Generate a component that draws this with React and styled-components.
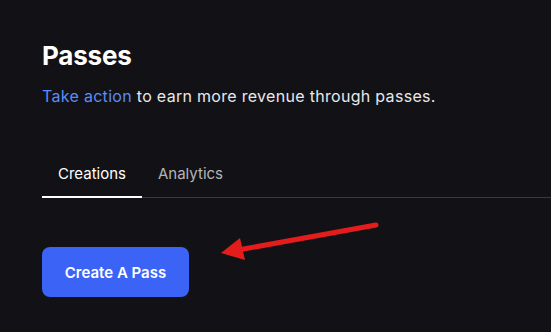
import React from "react";
import styled, { createGlobalStyle } from "styled-components";

const Global = createGlobalStyle`
  html, body {
    margin: 0;
    padding: 0;
    background: #121216;
  }
  body {
    font-family: Inter, "Noto Sans", sans-serif;
    color: #ffffff;
  }
`;

const Page = styled.div`
  position: relative;
  width: 551px;
  height: 332px;
  overflow: hidden;
  background: #121216;
  padding: 40px 0 0 42px;
  box-sizing: border-box;
`;

const Title = styled.h1`
  margin: 0;
  font-size: 26px;
  line-height: 32px;
  font-weight: 700;
  letter-spacing: -0.2px;
`;

const Subtitle = styled.p`
  margin: 14px 0 0;
  font-size: 16px;
  line-height: 20px;
  letter-spacing: 0.3px;
  color: #e8e8ea;
`;

const Link = styled.span`
  color: #5b8cf5;
`;

const Tabs = styled.div`
  display: flex;
  margin-top: 57px;
  border-bottom: 1px solid #3a3a40;
`;

const Tab = styled.div`
  padding: 0 16px 11px;
  font-size: 15px;
  line-height: 22px;
  color: ${(p) => (p.$active ? "#ffffff" : "#b4b4b8")};
  border-bottom: 2px solid ${(p) => (p.$active ? "#ffffff" : "transparent")};
  margin-bottom: -1px;
`;

const Button = styled.button`
  margin-top: 49px;
  width: 147px;
  height: 50px;
  border: none;
  border-radius: 8px;
  background: #3b64f7;
  color: #ffffff;
  font-family: Inter, "Noto Sans", sans-serif;
  font-size: 15px;
  font-weight: 600;
  cursor: pointer;
`;

const Arrow = styled.svg`
  position: absolute;
  left: 0;
  top: 0;
  pointer-events: none;
`;

export default function App() {
  return (
    <>
      <Global />
      <Page>
        <Title>Passes</Title>
        <Subtitle>
          <Link>Take action</Link> to earn more revenue through passes.
        </Subtitle>
        <Tabs>
          <Tab $active>Creations</Tab>
          <Tab>Analytics</Tab>
        </Tabs>
        <Button>Create A Pass</Button>
        <Arrow width="551" height="332" viewBox="0 0 551 332">
          <line
            x1="376"
            y1="225"
            x2="238"
            y2="250"
            stroke="#e51c1c"
            strokeWidth="5"
            strokeLinecap="round"
          />
          <polygon points="221,253 240,238 245,260" fill="#e51c1c" />
        </Arrow>
      </Page>
    </>
  );
}
